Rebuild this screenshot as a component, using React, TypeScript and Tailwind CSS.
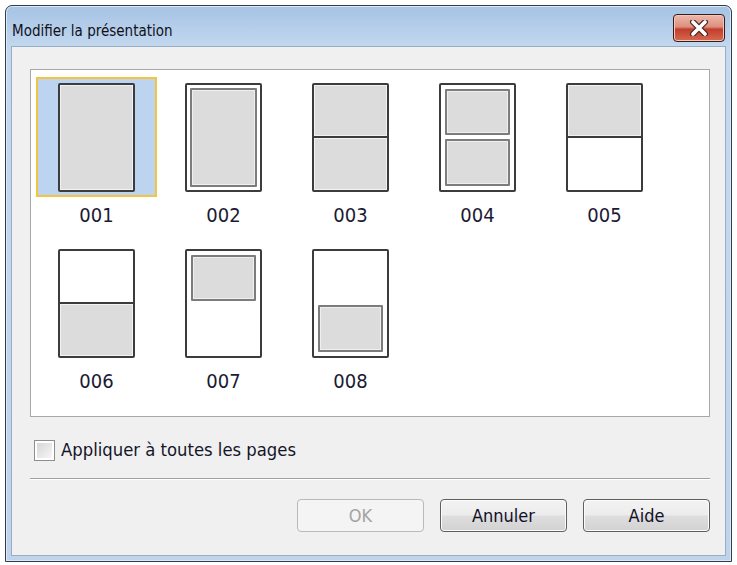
import * as React from "react"

const font = "[font-family:'DejaVu_Sans_Condensed','Liberation_Sans',sans-serif]"

type Variant = 1 | 2 | 3 | 4 | 5 | 6 | 7 | 8

// small layout preview of a page
const PageThumb: React.FC<{ variant: Variant }> = ({ variant }) => {
  const page = "w-[77px] h-[109px] border-2 border-[#3c3c3c] rounded-[2px] flex flex-col overflow-hidden"
  const gray = "bg-[#dcdcdc] shadow-[inset_0_0_0_1px_#f2f2f2]"
  const box = "border-2 border-[#7c7c7c] bg-[#dcdcdc] shadow-[inset_0_0_0_1px_#efefef] rounded-[1px]"

  switch (variant) {
    case 1:
      return <div className={`${page} ${gray}`} />
    case 2:
      return (
        <div className={`${page} bg-white p-[3px]`}>
          <div className={`flex-1 ${box}`} />
        </div>
      )
    case 3:
      return (
        <div className={`${page} bg-white`}>
          <div className={`flex-1 ${gray}`} />
          <div className="h-[2px] bg-[#3c3c3c]" />
          <div className={`flex-1 ${gray}`} />
        </div>
      )
    case 4:
      return (
        <div className={`${page} bg-white p-[4px] gap-[4px]`}>
          <div className={`flex-1 ${box}`} />
          <div className={`flex-1 ${box}`} />
        </div>
      )
    case 5:
      return (
        <div className={`${page} bg-white`}>
          <div className={`flex-1 ${gray}`} />
          <div className="h-[2px] bg-[#3c3c3c]" />
          <div className="flex-1 bg-white" />
        </div>
      )
    case 6:
      return (
        <div className={`${page} bg-white`}>
          <div className="flex-1 bg-white" />
          <div className="h-[2px] bg-[#3c3c3c]" />
          <div className={`flex-1 ${gray}`} />
        </div>
      )
    case 7:
      return (
        <div className={`${page} bg-white p-[4px]`}>
          <div className={`h-[46px] ${box}`} />
        </div>
      )
    case 8:
      return (
        <div className={`${page} bg-white p-[4px] justify-end`}>
          <div className={`h-[47px] ${box}`} />
        </div>
      )
  }
}

const layouts: { id: string; variant: Variant }[] = [
  { id: "001", variant: 1 },
  { id: "002", variant: 2 },
  { id: "003", variant: 3 },
  { id: "004", variant: 4 },
  { id: "005", variant: 5 },
  { id: "006", variant: 6 },
  { id: "007", variant: 7 },
  { id: "008", variant: 8 },
]

const DialogButton: React.FC<{ label: string; disabled?: boolean }> = ({ label, disabled }) => (
  <button
    disabled={disabled}
    className={
      disabled
        ? "w-[127px] h-[33px] rounded-[4px] border border-[#b9b9b9] bg-[#f4f4f4] text-[#a3a3a3] text-[18px]"
        : "w-[127px] h-[33px] rounded-[4px] border border-[#5f5f5f] bg-[linear-gradient(#f3f3f3_0%,#ececec_48%,#dedede_52%,#d2d2d2_100%)] shadow-[inset_0_0_0_1px_#fbfbfb] text-[#101028] text-[18px]"
    }
  >
    {label}
  </button>
)

export default function App() {
  const [selected, setSelected] = React.useState("001")
  const [applyAll, setApplyAll] = React.useState(false)

  return (
    <div className={`w-[737px] h-[565px] bg-white pl-[5px] pr-[5px] pt-[5px] pb-[3px] ${font}`}>
      <div className="h-full flex flex-col rounded-t-[7px] border border-[#2f3d4e] bg-[linear-gradient(#a6c3e4,#c4d9ef_44px,#bfd3ea)] shadow-[inset_0_0_0_1px_#dde8f5]">
        {/* Title bar */}
        <div className="h-[40px] flex items-start justify-between pl-[6px] pr-[6px]">
          <span className="mt-[15px] text-[15px] leading-[20px] text-[#10101a]">Modifier la présentation</span>
          <button className="mt-[8px] w-[52px] h-[28px] rounded-[4px] border border-[#3a1a16] bg-[linear-gradient(#eeb8aa_0%,#dc907e_45%,#c23e2c_55%,#d66a50_100%)] shadow-[inset_0_0_0_1px_#f3c8b8] flex items-center justify-center">
            <svg width="20" height="16" viewBox="0 0 20 16">
              <path d="M4 2 L16 14 M16 2 L4 14" stroke="#4a2a26" strokeWidth="6" strokeLinecap="round" />
              <path d="M4 2 L16 14 M16 2 L4 14" stroke="#ffffff" strokeWidth="3.6" strokeLinecap="round" />
            </svg>
          </button>
        </div>

        {/* Dialog body */}
        <div className="flex-1 mx-[5px] mb-[5px] border border-[#98aec6] bg-[#f0f0f0] pl-[18px] pr-[15px] pt-[22px] flex flex-col">
          <div className="h-[348px] border border-[#a8a8a8] bg-white pl-[5px] pt-[7px]">
            <div className="grid grid-cols-[repeat(5,121px)] gap-x-[6px] gap-y-[17px]">
              {layouts.map((l) => (
                <div key={l.id} className="flex flex-col items-center cursor-pointer" onClick={() => setSelected(l.id)}>
                  <div
                    className={
                      selected === l.id
                        ? "w-[121px] h-[120px] flex items-center justify-center border-2 border-[#f3c53e] bg-[#bcd4ef]"
                        : "w-[121px] h-[120px] flex items-center justify-center border-2 border-transparent"
                    }
                  >
                    <PageThumb variant={l.variant} />
                  </div>
                  <span className="mt-[7px] text-[20px] leading-[22px] text-[#1b1a33]">{l.id}</span>
                </div>
              ))}
            </div>
          </div>

          {/* Apply to all */}
          <label className="mt-[22px] ml-[4px] flex items-center gap-[6px] cursor-pointer select-none">
            <span
              className="w-[21px] h-[21px] border border-[#8e8e8e] bg-white p-[2px] flex"
              onClick={() => setApplyAll(!applyAll)}
            >
              <span className="flex-1 bg-[linear-gradient(135deg,#d6d6d6,#f6f6f6)] flex items-center justify-center text-[14px] leading-none text-[#1b1a33]">
                {applyAll ? "✓" : ""}
              </span>
            </span>
            <span className="text-[18.3px] leading-[22px] text-[#15152a]">Appliquer à toutes les pages</span>
          </label>

          {/* Separator */}
          <div className="mt-[17px] border-t border-[#a0a0a0] border-b border-b-white" />

          {/* Buttons */}
          <div className="mt-[19px] flex justify-end gap-[16px]">
            <DialogButton label="OK" disabled />
            <DialogButton label="Annuler" />
            <DialogButton label="Aide" />
          </div>
        </div>
      </div>
    </div>
  )
}
